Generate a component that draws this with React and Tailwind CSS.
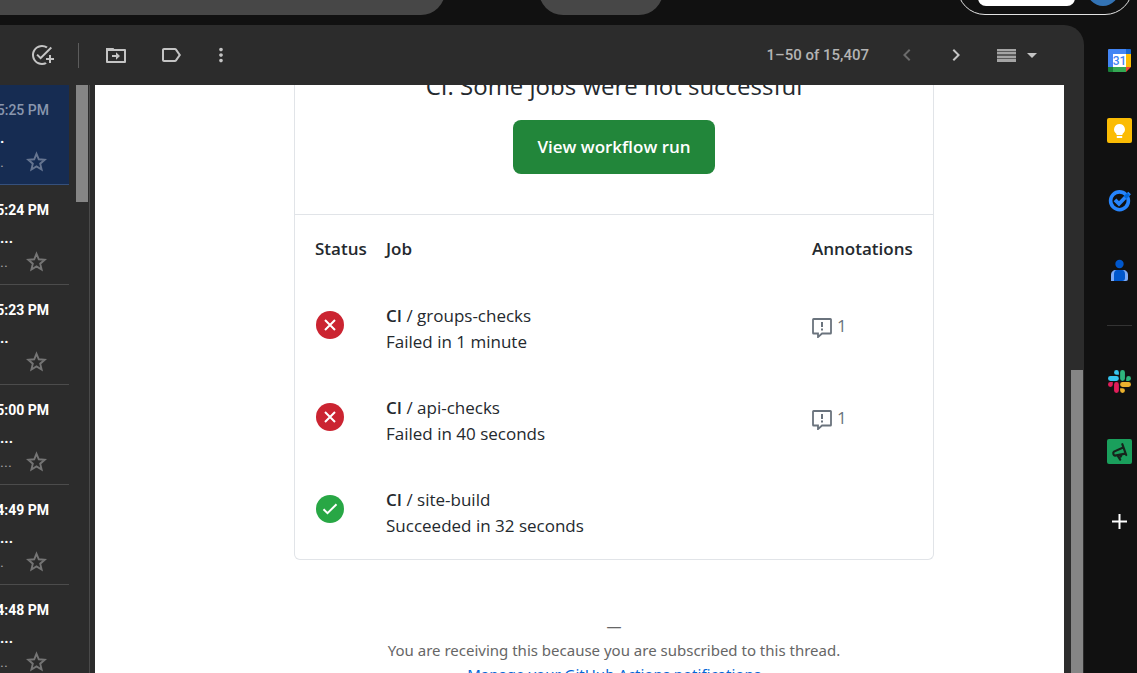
import React from 'react';
import {
  MdAddTask,
  MdArrowDropDown,
  MdChevronLeft,
  MdChevronRight,
  MdLabelOutline,
  MdMoreVert,
} from 'react-icons/md';

const emails = [
  { id: 1, time: '5:25 PM', subject: '.', snippet: '.', selected: true },
  { id: 2, time: '5:24 PM', subject: '...', snippet: '..' },
  { id: 3, time: '5:23 PM', subject: '..', snippet: '' },
  { id: 4, time: '5:00 PM', subject: '...', snippet: '...' },
  { id: 5, time: '4:49 PM', subject: '...', snippet: '.' },
  { id: 6, time: '4:48 PM', subject: '...', snippet: '..' },
];

const jobs = [
  { name: 'groups-checks', result: 'Failed in 1 minute', ok: false, annotations: 1 },
  { name: 'api-checks', result: 'Failed in 40 seconds', ok: false, annotations: 1 },
  { name: 'site-build', result: 'Succeeded in 32 seconds', ok: true, annotations: 0 },
];

function StatusIcon({ ok }) {
  return (
    <svg viewBox="0 0 28 28" className="w-7 h-7" role="img" aria-label={ok ? 'Success' : 'Failure'}>
      <circle cx="14" cy="14" r="14" fill={ok ? '#28a745' : '#cb2431'} />
      <path
        d={ok ? 'M7.5 14.2l4 4 9-9' : 'M9 9l10 10M19 9L9 19'}
        fill="none"
        stroke="#fff"
        strokeWidth="2"
      />
    </svg>
  );
}

function AnnotationIcon() {
  return (
    <svg viewBox="0 0 20 20" className="w-5 h-5 mt-1" aria-hidden="true">
      <path
        d="M1.6 1h16.8a.6.6 0 0 1 .6.6v13.3a.6.6 0 0 1-.6.6H10l-4 3.6v-3.6H1.6a.6.6 0 0 1-.6-.6V1.6a.6.6 0 0 1 .6-.6z"
        fill="none"
        stroke="#6a737d"
        strokeWidth="1.8"
      />
      <path d="M9 4h2v5H9zM9 10.6h2v2H9z" fill="#6a737d" />
    </svg>
  );
}

function MoveToIcon() {
  return (
    <svg viewBox="0 0 24 24" className="w-6 h-6" aria-hidden="true">
      <path d="M3 7h18v12H3z" fill="none" stroke="currentColor" strokeWidth="2" strokeLinejoin="round" />
      <path d="M2 5h7.5l2 3H2z" fill="currentColor" />
      <path d="M8 12h4V9.2l4 3.8-4 3.8V14H8z" fill="currentColor" />
    </svg>
  );
}

function StarIcon() {
  return (
    <svg viewBox="0 0 22 22" className="w-[22px] h-[22px]" aria-hidden="true">
      <path
        d="M10.5 2.8l2.3 5.5 5.9.5-4.5 3.9 1.4 5.8-5.1-3.1-5.1 3.1 1.4-5.8-4.5-3.9 5.9-.5z"
        fill="none"
        stroke="currentColor"
        strokeWidth="1.9"
      />
    </svg>
  );
}

function CalendarIcon() {
  return (
    <svg viewBox="0 0 25 25" className="w-[25px] h-[25px]" aria-hidden="true">
      <path d="M2 1h17v5H6v13H1V2a1 1 0 0 1 1-1z" fill="#4285f4" />
      <path d="M19 1h4a1 1 0 0 1 1 1v4h-5z" fill="#1967d2" />
      <path d="M19 6h5v13h-5z" fill="#fbbc04" />
      <path d="M6 19h13v5H6z" fill="#34a853" />
      <path d="M1 19h5v5H2a1 1 0 0 1-1-1z" fill="#188038" />
      <path d="M19 19h5l-5 5z" fill="#ea4335" />
      <path d="M6 6h13v13H6z" fill="#fff" />
      <text x="12.5" y="17" textAnchor="middle" fontSize="12" fontWeight="500" fontFamily="Roboto, sans-serif" fill="#4285f4">31</text>
    </svg>
  );
}

function KeepIcon() {
  return (
    <svg viewBox="0 0 25 25" className="w-[25px] h-[25px]" aria-hidden="true">
      <rect width="25" height="25" rx="2" fill="#fbbc04" />
      <path d="M12.5 6a5.4 5.4 0 0 0-3 9.9V17h6v-1.1a5.4 5.4 0 0 0-3-9.9zM9.8 18h5.4v2H9.8z" fill="#fff" />
    </svg>
  );
}

function TasksIcon() {
  return (
    <svg viewBox="0 0 25 25" className="w-[25px] h-[25px]" aria-hidden="true">
      <circle cx="12.5" cy="12.8" r="8.9" fill="none" stroke="#2684fc" strokeWidth="3.6" />
      <path d="M8 11.8l4 4L22.6 5" fill="none" stroke="#2684fc" strokeWidth="3.8" />
      <path d="M18 9.6l3.6-3.6" stroke="#0066da" strokeWidth="3.8" />
    </svg>
  );
}

function ContactsIcon() {
  return (
    <svg viewBox="0 0 25 25" className="w-[25px] h-[25px]" aria-hidden="true">
      <circle cx="12.5" cy="6" r="4.2" fill="#0057cc" />
      <path d="M9 12h7c3 0 5 2 5 5v4a2 2 0 0 1-2 2H4v-6c0-3 2-5 5-5z" fill="#7baaf7" />
      <path d="M10 12h5c2 0 3 2 3 4v4c0 2-1 3-3 3H7v-7c0-2 1-4 3-4z" fill="#0057cc" />
    </svg>
  );
}

function SlackIcon() {
  return (
    <svg viewBox="0 0 24 24" className="w-[23px] h-[23px]" aria-hidden="true">
      <path fill="#e01e5a" d="M5.042 15.165a2.528 2.528 0 0 1-2.52 2.523A2.528 2.528 0 0 1 0 15.165a2.527 2.527 0 0 1 2.522-2.52h2.52v2.52zM6.313 15.165a2.527 2.527 0 0 1 2.521-2.52 2.527 2.527 0 0 1 2.521 2.52v6.313A2.528 2.528 0 0 1 8.834 24a2.528 2.528 0 0 1-2.521-2.522v-6.313z" />
      <path fill="#36c5f0" d="M8.834 5.042a2.528 2.528 0 0 1-2.521-2.52A2.528 2.528 0 0 1 8.834 0a2.528 2.528 0 0 1 2.521 2.522v2.52H8.834zM8.834 6.313a2.528 2.528 0 0 1 2.521 2.521 2.528 2.528 0 0 1-2.521 2.521H2.522A2.528 2.528 0 0 1 0 8.834a2.528 2.528 0 0 1 2.522-2.521h6.312z" />
      <path fill="#2eb67d" d="M18.956 8.834a2.528 2.528 0 0 1 2.522-2.521A2.528 2.528 0 0 1 24 8.834a2.528 2.528 0 0 1-2.522 2.521h-2.522V8.834zM17.688 8.834a2.528 2.528 0 0 1-2.523 2.521 2.527 2.527 0 0 1-2.52-2.521V2.522A2.527 2.527 0 0 1 15.165 0a2.528 2.528 0 0 1 2.523 2.522v6.312z" />
      <path fill="#ecb22e" d="M15.165 18.956a2.528 2.528 0 0 1 2.523 2.522A2.528 2.528 0 0 1 15.165 24a2.527 2.527 0 0 1-2.52-2.522v-2.522h2.52zM15.165 17.688a2.527 2.527 0 0 1-2.52-2.523 2.526 2.526 0 0 1 2.52-2.52h6.313A2.527 2.527 0 0 1 24 15.165a2.528 2.528 0 0 1-2.522 2.523h-6.313z" />
    </svg>
  );
}

function MegaphoneIcon() {
  return (
    <svg viewBox="0 0 25 25" className="w-[25px] h-[25px]" aria-hidden="true">
      <rect width="25" height="25" rx="2" fill="#1a9f5c" />
      <path
        d="M15.3 5.2l3.9 10.8M16.2 8.4L7 12.6c-1.4 1-.6 4.2 1 4l10.2-2M10.8 17l2.4 3.6M14.6 16l-1 1.6"
        fill="none"
        stroke="#16241c"
        strokeWidth="2.2"
        strokeLinecap="round"
      />
    </svg>
  );
}

function PlusIcon() {
  return (
    <svg viewBox="0 0 25 25" className="w-[25px] h-[25px]" aria-hidden="true">
      <path d="M12.5 5v15M5 12.5h15" stroke="#fff" strokeWidth="2" />
    </svg>
  );
}

function SideButton({ label, children }) {
  return (
    <button aria-label={label} className="w-[25px] h-[70px] flex items-center justify-center">
      {children}
    </button>
  );
}

function TopBar() {
  return (
    <header className="h-[25px] shrink-0 flex items-start overflow-hidden">
      <input
        type="search"
        aria-label="Search mail"
        className="w-[445px] h-12 -mt-[33px] rounded-r-full bg-[#474747] outline-none"
      />
      <button aria-label="Status" className="w-[124px] h-12 -mt-[33px] ml-[94px] rounded-full bg-[#474747]" />
      <div className="ml-auto mr-1 w-[176px] h-14 -mt-[41px] rounded-full border border-[#e3e3e3] flex items-end justify-end gap-3 pb-2 pr-[13px]">
        <span className="w-[97px] h-8 rounded-lg bg-white" />
        <span className="w-8 h-8 rounded-full bg-[#3373b5]" />
      </div>
    </header>
  );
}

function Toolbar() {
  return (
    <div className="h-[60px] shrink-0 flex items-center text-[#c4c4c4]">
      <button aria-label="Add to Tasks" className="ml-[30px]"><MdAddTask className="w-6 h-6" /></button>
      <span className="ml-6 w-px h-[25px] bg-[#5c5c5c]" />
      <button aria-label="Move to" className="ml-[25px]"><MoveToIcon /></button>
      <button aria-label="Labels" className="ml-[31px]"><MdLabelOutline className="w-6 h-6" /></button>
      <button aria-label="More" className="ml-[27px]"><MdMoreVert className="w-[22px] h-[22px]" /></button>
      <span className="ml-auto font-[Roboto,sans-serif] font-medium text-[15px] text-[#b4b4b4]">1–50 of 15,407</span>
      <button aria-label="Newer" className="ml-[26px] text-[#6b6b6b]"><MdChevronLeft className="w-6 h-6" /></button>
      <button aria-label="Older" className="ml-[25px]"><MdChevronRight className="w-6 h-6" /></button>
      <button aria-label="Input tools" className="ml-[29px] mr-10 flex items-center">
        <svg viewBox="0 0 19 14" className="w-[19px] h-[14px]" aria-hidden="true">
          <path d="M0 1h19v2H0zM0 4h19v2H0zM0 8h19v2H0zM0 11h19v3H0z" fill="#a4a4a4" />
          <path d="M0 3h19v1H0zM0 6h19v2H0zM0 10h19v1H0z" fill="#5a5a5a" />
        </svg>
        <MdArrowDropDown className="w-6 h-6 ml-1" />
      </button>
    </div>
  );
}

function EmailRow({ email }) {
  return (
    <li className={`h-[100px] border-b pt-4 ${email.selected ? 'bg-[#162c52] border-[#35507c]' : 'border-[#4c4c4c]'}`}>
      <div className={`flex justify-end pr-5 text-sm leading-[18px] whitespace-nowrap ${email.selected ? 'font-medium text-[#8996ad]' : 'font-bold text-white'}`}>
        {email.time}
      </div>
      <div className="mt-[11px] h-4 text-[15px] leading-4 font-bold text-white">{email.subject}</div>
      <div className="flex justify-between pr-[21px]">
        <span className="mt-2 h-4 text-[15px] leading-4 text-[#a0a0a0]">{email.snippet}</span>
        <button aria-label="Star" className={`mt-[5px] ${email.selected ? 'text-[#667590]' : 'text-[#757575]'}`}>
          <StarIcon />
        </button>
      </div>
    </li>
  );
}

function EmailList() {
  return (
    <div className="w-[95px] shrink-0 flex overflow-hidden font-[Roboto,sans-serif]">
      <ul className="w-[69px]">
        {emails.map((email) => (
          <EmailRow key={email.id} email={email} />
        ))}
      </ul>
      <div className="ml-[7px] w-3 h-[117px] bg-[#858585]" />
      <div className="ml-px w-px bg-[#4a4a4a]" />
    </div>
  );
}

function JobsTable() {
  return (
    <table className="w-full text-left text-[17px] leading-[26px]">
      <thead>
        <tr className="h-[68px]">
          <th className="w-[81px] pl-5 font-semibold">Status</th>
          <th className="pl-[10px] font-semibold">Job</th>
          <th className="w-[122px] pl-px font-semibold">Annotations</th>
        </tr>
      </thead>
      <tbody>
        {jobs.map((job) => (
          <tr key={job.name}>
            <td className="pl-[21px] pb-2"><StatusIcon ok={job.ok} /></td>
            <td className="pl-[10px] py-5">
              <div><span className="font-semibold">CI</span> / {job.name}</div>
              <div>{job.result}</div>
            </td>
            <td className="pl-px pb-[6px] text-[#6a737d]">
              {job.annotations > 0 && (
                <div className="flex items-center gap-[5px]">
                  <AnnotationIcon />
                  <span>{job.annotations}</span>
                </div>
              )}
            </td>
          </tr>
        ))}
      </tbody>
    </table>
  );
}

function Message() {
  return (
    <main className="flex-1 min-w-0 overflow-hidden bg-white pl-[69px] text-[#24292e] font-['Open_Sans',sans-serif]">
      <section className="max-w-[640px] mx-auto border border-t-0 border-[#e1e4e8] rounded-b-md">
        <div className="-mt-[19px] pb-10 flex flex-col items-center border-b border-[#e1e4e8]">
          <h2 className="text-2xl leading-10 font-medium whitespace-nowrap">CI: Some jobs were not successful</h2>
          <a href="#run" className="mt-[14px] px-6 py-[14px] rounded-lg bg-[#22863a] text-[17px] leading-[26px] font-semibold text-white">
            View workflow run
          </a>
        </div>
        <JobsTable />
      </section>
      <footer className="mt-[54px] text-center font-['Noto_Sans',sans-serif] text-[15px] leading-6 text-[#666666] whitespace-nowrap">
        <p>—</p>
        <p>You are receiving this because you are subscribed to this thread.</p>
        <a href="#notifications" className="text-[#0366d6]">Manage your GitHub Actions notifications</a>
      </footer>
    </main>
  );
}

function SidePanel() {
  return (
    <aside className="w-[53px] shrink-0 pl-[23px]">
      <SideButton label="Calendar"><CalendarIcon /></SideButton>
      <SideButton label="Keep"><KeepIcon /></SideButton>
      <SideButton label="Tasks"><TasksIcon /></SideButton>
      <SideButton label="Contacts"><ContactsIcon /></SideButton>
      <div className="my-5 w-[25px] h-px bg-[#333333]" />
      <SideButton label="Slack"><SlackIcon /></SideButton>
      <SideButton label="Campaigns"><MegaphoneIcon /></SideButton>
      <SideButton label="Get add-ons"><PlusIcon /></SideButton>
    </aside>
  );
}

export default function App() {
  return (
    <div className="h-screen flex flex-col overflow-hidden bg-[#111111]">
      <TopBar />
      <div className="flex-1 min-h-0 flex">
        <div className="flex-1 min-w-0 flex flex-col overflow-hidden rounded-tr-[20px] bg-[#2c2c2c]">
          <Toolbar />
          <div className="flex-1 min-h-0 flex">
            <EmailList />
            <Message />
            <div className="w-5 shrink-0 flex flex-col">
              <div className="flex-1 ml-[7px] mr-px mt-[285px] bg-[#858585]" />
            </div>
          </div>
        </div>
        <SidePanel />
      </div>
    </div>
  );
}
